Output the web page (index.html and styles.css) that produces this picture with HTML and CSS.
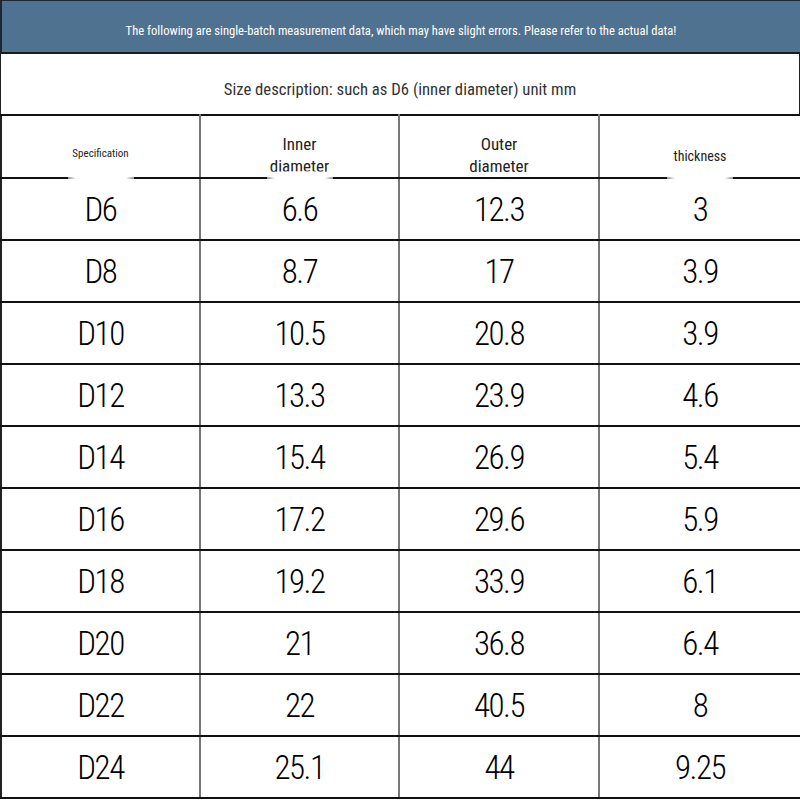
FILE: index.html
```html
<!DOCTYPE html>
<html>
<head>
<meta charset="utf-8">
<link rel="stylesheet" href="styles.css">
</head>
<body>
<div class="page">
  <div class="banner">The following are single-batch measurement data, which may have slight errors. Please refer to the actual data!</div>
  <div class="desc">Size description: such as D6 (inner diameter) unit mm</div>
  <table class="sizes">
    <colgroup><col class="c1"><col class="c2"><col class="c3"><col class="c4"></colgroup>
    <thead>
      <tr>
        <th><span class="h-small">Specification</span><span class="glow"></span></th>
        <th><span class="h-two">Inner<br>diameter</span><span class="glow"></span></th>
        <th><span class="h-two">Outer<br>diameter</span></th>
        <th><span class="h-mid">thickness</span><span class="glow"></span></th>
      </tr>
    </thead>
    <tbody>
      <tr><td>D6</td><td>6.6</td><td>12.3</td><td>3</td></tr>
      <tr><td>D8</td><td>8.7</td><td>17</td><td>3.9</td></tr>
      <tr><td>D10</td><td>10.5</td><td>20.8</td><td>3.9</td></tr>
      <tr><td>D12</td><td>13.3</td><td>23.9</td><td>4.6</td></tr>
      <tr><td>D14</td><td>15.4</td><td>26.9</td><td>5.4</td></tr>
      <tr><td>D16</td><td>17.2</td><td>29.6</td><td>5.9</td></tr>
      <tr><td>D18</td><td>19.2</td><td>33.9</td><td>6.1</td></tr>
      <tr><td>D20</td><td>21</td><td>36.8</td><td>6.4</td></tr>
      <tr><td>D22</td><td>22</td><td>40.5</td><td>8</td></tr>
      <tr><td>D24</td><td>25.1</td><td>44</td><td>9.25</td></tr>
    </tbody>
  </table>
</div>
</body>
</html>
```
FILE: styles.css
```css
html, body {
  margin: 0;
  padding: 0;
  background: #ffffff;
}
.page {
  width: 800px;
  font-family: "Roboto Condensed", "Liberation Sans Narrow", sans-serif;
  color: #111;
}
.banner {
  box-sizing: border-box;
  height: 54px;
  background: #4f7291;
  border-top: 1px solid #1b2733;
  border-left: 2px solid #1b2733;
  border-bottom: 2px solid #1b1b1b;
  color: #ffffff;
  font-size: 12.6px;
  text-align: center;
  padding-top: 22px;
  line-height: 16px;
}
.desc {
  box-sizing: border-box;
  height: 60px;
  border-left: 1px solid #222;
  border-right: 1px solid #222;
  color: #333;
  font-size: 16.7px;
  text-align: center;
  padding-top: 26px;
  line-height: 20px;
}
.sizes {
  border-collapse: collapse;
  table-layout: fixed;
  width: 800px;
}
.c1 { width: 199px; }
.c2 { width: 199px; }
.c3 { width: 200px; }
.c4 { width: 202px; }
.sizes th, .sizes td {
  border-top: 2px solid #111;
  border-bottom: 2px solid #111;
  border-left: 2px solid #777;
  border-right: 2px solid #777;
  text-align: center;
  padding: 0;
  font-weight: normal;
}
.sizes th:first-child, .sizes td:first-child { border-left-color: #222; }
.sizes th:last-child, .sizes td:last-child { border-right-color: #222; }
.sizes th {
  position: relative;
  height: 61px;
  vertical-align: top;
  color: #222;
}
.sizes td {
  height: 60px;
  font-size: 33px;
  font-weight: 300;
  letter-spacing: -1.5px;
  color: #000;
}
.h-small { display: block; font-size: 11px; line-height: 13px; margin-top: 31px; }
.h-two { display: block; font-size: 17px; line-height: 22px; margin-top: 17px; }
.h-mid { display: block; font-size: 14px; line-height: 17px; margin-top: 32px; }
.glow {
  position: absolute;
  left: 50%;
  bottom: -6px;
  width: 66px;
  height: 12px;
  margin-left: -33px;
  background: radial-gradient(ellipse at center, #ffffff 55%, rgba(255,255,255,0.6) 70%, rgba(255,255,255,0) 100%);
}
```
